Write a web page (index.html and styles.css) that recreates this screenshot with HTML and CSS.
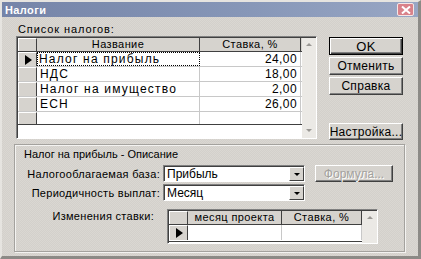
FILE: index.html
```html
<!DOCTYPE html>
<html lang="ru">
<head>
    <meta charset="UTF-8">
    <title>Налоги</title>
    <link rel="stylesheet" href="styles.css">
</head>
<body>
    <div class="window">
        <div class="titlebar">
            <span class="title">Налоги</span>
            <span class="close-btn">
                <svg width="10" height="8" viewBox="0 0 10 8">
                    <path d="M1 0.5 L9 7.5 M9 0.5 L1 7.5" stroke="#fff" stroke-width="2"/>
                </svg>
            </span>
        </div>

        <div class="dialog">
            <div class="top">
                <div class="list">
                    <div class="label">Список налогов:</div>
                    <div class="grid grid-taxes">
                        <div class="grid-main">
                            <div class="grid-rows">
                                <div class="row head">
                                    <div class="ind"></div>
                                    <div class="cell name">Название</div>
                                    <div class="cell rate">Ставка, %</div>
                                </div>
                                <div class="row">
                                    <div class="ind"><span class="arrow"></span></div>
                                    <div class="cell name focus">Налог на прибыль</div>
                                    <div class="cell rate">24,00</div>
                                </div>
                                <div class="row">
                                    <div class="ind"></div>
                                    <div class="cell name">НДС</div>
                                    <div class="cell rate">18,00</div>
                                </div>
                                <div class="row">
                                    <div class="ind"></div>
                                    <div class="cell name">Налог на имущество</div>
                                    <div class="cell rate">2,00</div>
                                </div>
                                <div class="row">
                                    <div class="ind"></div>
                                    <div class="cell name">ЕСН</div>
                                    <div class="cell rate">26,00</div>
                                </div>
                                <div class="row">
                                    <div class="ind"></div>
                                    <div class="cell name"></div>
                                    <div class="cell rate"></div>
                                </div>
                            </div>
                            <div class="grid-fill"></div>
                        </div>
                        <div class="scroll">
                            <span class="sc-up"></span>
                            <span class="sc-down"></span>
                        </div>
                    </div>
                </div>

                <div class="buttons">
                    <div class="btn default">OK</div>
                    <div class="btn">Отменить</div>
                    <div class="btn">Справка</div>
                    <div class="btn setup">Настройка...</div>
                </div>
            </div>

            <div class="group">
                <div class="group-title">Налог на прибыль - Описание</div>

                <div class="form-row">
                    <div class="form-label">Налогооблагаемая база:</div>
                    <div class="combo">
                        <span class="combo-text">Прибыль</span>
                        <span class="combo-btn"><span class="down-arrow"></span></span>
                    </div>
                    <div class="btn disabled">Формула...</div>
                </div>

                <div class="form-row">
                    <div class="form-label">Периодичность выплат:</div>
                    <div class="combo">
                        <span class="combo-text">Месяц</span>
                        <span class="combo-btn"><span class="down-arrow"></span></span>
                    </div>
                </div>

                <div class="form-row changes">
                    <div class="form-label">Изменения ставки:</div>
                    <div class="grid grid-changes">
                        <div class="grid-main">
                            <div class="grid-rows">
                                <div class="row head">
                                    <div class="ind"></div>
                                    <div class="cell month">месяц проекта</div>
                                    <div class="cell pct">Ставка, %</div>
                                </div>
                                <div class="row">
                                    <div class="ind"><span class="arrow"></span></div>
                                    <div class="cell month"></div>
                                    <div class="cell pct"></div>
                                </div>
                            </div>
                            <div class="grid-fill"></div>
                        </div>
                        <div class="scroll">
                            <span class="sc-up"></span>
                        </div>
                    </div>
                </div>
            </div>
        </div>
    </div>
</body>
</html>
```

FILE: styles.css
```css
body {
    margin: 0;
    padding: 0;
    font-family: "Liberation Sans", Arial, sans-serif;
    font-size: 11px;
    color: #000;
    background: #d6d3ce;
}

.window {
    width: 421px;
    height: 259px;
    box-sizing: border-box;
    background-color: #d6d3ce;
    background-image: repeating-conic-gradient(#d3d0cb 0 25%, #dad7d2 0 50%);
    background-size: 2px 2px;
    border-left: 2px solid #e6e4e0;
    border-right: 3px solid #8c8a86;
    border-bottom: 3px solid #8c8a86;
    border-top: 2px solid #e6e4e0;
    overflow: hidden;
}

/* title bar */
.titlebar {
    height: 15px;
    display: flex;
    align-items: center;
    justify-content: space-between;
    padding: 0 4px 0 3px;
    background: linear-gradient(to right, #7584a8, #8797b8 60%, #98a6c4);
}

.title {
    color: #fff;
    font-weight: bold;
    font-size: 11px;
    letter-spacing: 0.4px;
}

.close-btn {
    width: 15px;
    height: 11px;
    display: flex;
    align-items: center;
    justify-content: center;
    background: #d9828a;
    border: 1px solid #f4e6e6;
    border-radius: 2px;
}

/* dialog body */
.dialog {
    padding: 6px 0 0 12px;
}

.top {
    display: flex;
    align-items: flex-start;
}

.list {
    padding-left: 2px;
}

.label {
    height: 13px;
    line-height: 13px;
    padding-left: 2px;
    letter-spacing: 0.9px;
}

/* grids */
.grid {
    display: flex;
    box-sizing: border-box;
    background: #fff;
    border: 1px solid;
    border-color: #808080 #fff #fff #808080;
    box-shadow: inset 1px 1px #404040;
    padding: 1px 0 0 1px;
}

.grid-taxes {
    width: 301px;
    height: 103px;
}

.grid-main {
    flex: 1;
    display: flex;
    flex-direction: column;
}

.grid-rows {
    overflow: hidden;
    border-bottom: 1px solid #404040;
}

.grid-taxes .grid-rows {
    height: 86px;
}

.grid-fill {
    flex: 1;
    background: #fff;
}

.row {
    display: flex;
    height: 15px;
    box-sizing: border-box;
    border-bottom: 1px solid #c8c8c8;
    background: #fff;
}

.row.head {
    height: 14px;
    border-bottom: 1px solid #404040;
    background: #d6d3ce;
}

.ind {
    width: 19px;
    flex-shrink: 0;
    box-sizing: border-box;
    background: #d6d3ce;
    border-left: 1px solid #fff;
    border-top: 1px solid #fff;
    border-right: 1px solid #404040;
    display: flex;
    align-items: center;
    justify-content: center;
}

.arrow {
    width: 0;
    height: 0;
    border-top: 5px solid transparent;
    border-bottom: 5px solid transparent;
    border-left: 7px solid #000;
    margin-left: 2px;
}

.cell {
    box-sizing: border-box;
    line-height: 14px;
    padding: 0 3px;
    white-space: nowrap;
    border-right: 1px solid #c8c8c8;
    font-size: 12px;
    letter-spacing: 1.2px;
}

.head .cell {
    text-align: center;
    line-height: 13px;
    font-size: 11px;
    letter-spacing: 0.4px;
    border-right: 1px solid #404040;
}

.name {
    width: 163px;
}

.rate {
    width: 101px;
    text-align: right;
    letter-spacing: 0.4px;
}

.focus {
    border: 1px dotted #000;
    line-height: 12px;
    padding-left: 1px;
}

.scroll {
    width: 14px;
    background: #ebe9e5;
    display: flex;
    flex-direction: column;
    justify-content: space-between;
    align-items: center;
    padding: 5px 0 6px;
    box-sizing: border-box;
}

.sc-up {
    width: 0;
    height: 0;
    border-left: 3px solid transparent;
    border-right: 3px solid transparent;
    border-bottom: 3px solid #9a9894;
}

.sc-down {
    width: 0;
    height: 0;
    border-left: 3px solid transparent;
    border-right: 3px solid transparent;
    border-top: 3px solid #9a9894;
}

/* buttons */
.buttons {
    display: flex;
    flex-direction: column;
    gap: 2px;
    margin-left: 12px;
    padding-top: 14px;
}

.btn {
    width: 74px;
    height: 18px;
    box-sizing: border-box;
    display: flex;
    align-items: center;
    justify-content: center;
    background: #d6d3ce;
    border: 1px solid;
    border-color: #fff #404040 #404040 #fff;
    box-shadow: inset -1px -1px #808080;
    font-size: 12px;
    letter-spacing: 0.3px;
}

.btn.default {
    border: 1px solid #000;
    box-shadow: inset 1px 1px #fff, inset -1px -1px #404040, inset -2px -2px #808080;
    font-size: 13px;
}

.btn.setup {
    margin-top: 26px;
    height: 17px;
}

.btn.disabled {
    width: 78px;
    height: 17px;
    margin-left: 10px;
    color: #a4a29e;
    text-shadow: 1px 1px #fff;
    letter-spacing: 0;
}

/* description group */
.group {
    width: 391px;
    height: 108px;
    box-sizing: border-box;
    margin-top: 4px;
    border: 1px solid #a4a29e;
    box-shadow: inset 1px 1px #f4f3f1, 1px 1px #f4f3f1;
    padding: 3px 0 0 0;
}

.group-title {
    height: 13px;
    line-height: 13px;
    padding-left: 9px;
    margin-bottom: 4px;
}

.form-row {
    display: flex;
    align-items: center;
    height: 17px;
    margin-bottom: 2px;
}

.form-label {
    width: 145px;
    text-align: right;
    white-space: nowrap;
    margin-right: 3px;
    letter-spacing: 0.3px;
}

.combo {
    width: 142px;
    height: 17px;
    box-sizing: border-box;
    display: flex;
    background: #fff;
    border: 1px solid;
    border-color: #808080 #fff #fff #808080;
    box-shadow: inset 1px 1px #404040;
    padding: 1px 0 0 1px;
}

.combo-text {
    flex: 1;
    line-height: 14px;
    padding-left: 2px;
    font-size: 12px;
}

.combo-btn {
    width: 15px;
    box-sizing: border-box;
    background: #d6d3ce;
    border: 1px solid;
    border-color: #fff #404040 #404040 #fff;
    display: flex;
    align-items: center;
    justify-content: center;
}

.down-arrow {
    width: 0;
    height: 0;
    border-left: 3px solid transparent;
    border-right: 3px solid transparent;
    border-top: 3px solid #000;
}

.form-row.changes {
    align-items: flex-start;
    height: auto;
    margin-top: 8px;
}

.form-row.changes .form-label {
    width: 139px;
    margin-right: 13px;
    padding-top: 1px;
}

.grid-changes {
    width: 211px;
    height: 35px;
}

.grid-changes .grid-rows {
    height: 30px;
}

.grid-changes .row:last-child {
    border-bottom: 0;
}

.month {
    width: 94px;
}

.pct {
    width: 80px;
}

.grid-changes .scroll {
    width: 16px;
}
```
